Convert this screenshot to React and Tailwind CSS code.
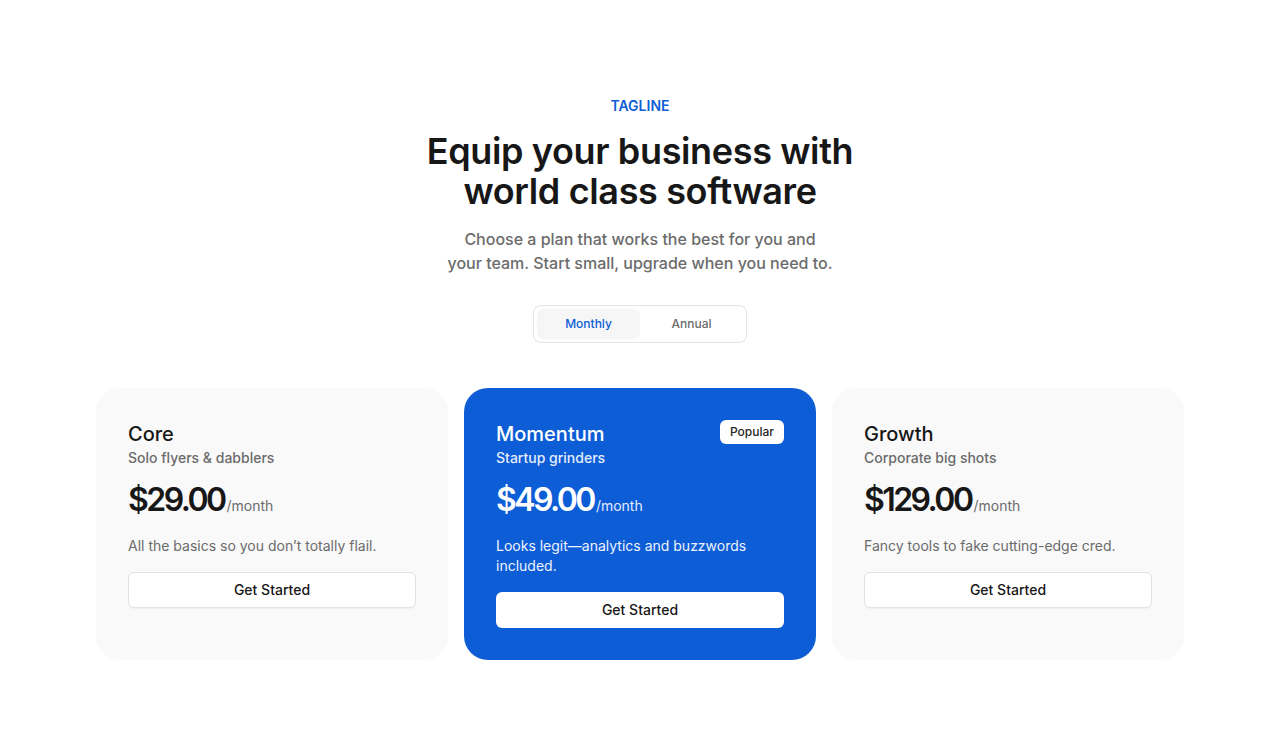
const plans = [
  {
    name: "Core",
    tagline: "Solo flyers & dabblers",
    price: "$29.00",
    desc: "All the basics so you don’t totally flail.",
  },
  {
    name: "Momentum",
    tagline: "Startup grinders",
    price: "$49.00",
    desc: "Looks legit—analytics and buzzwords included.",
    popular: true,
  },
  {
    name: "Growth",
    tagline: "Corporate big shots",
    price: "$129.00",
    desc: "Fancy tools to fake cutting-edge cred.",
  },
];

const PlanCard = ({ plan }) => {
  const hot = plan.popular;
  return (
    <div
      className={`${
        hot ? "bg-[#0d5dd6] text-white" : "bg-[#f9f9f9] text-[#171717]"
      } rounded-3xl p-8 flex flex-col`}
    >
      <div className="flex items-start justify-between">
        <div>
          <h3 className="text-xl leading-7 font-medium">{plan.name}</h3>
          <p
            className={`text-sm leading-5 font-medium ${
              hot ? "text-[#e3ecfb]" : "text-[#6b6b6b]"
            }`}
          >
            {plan.tagline}
          </p>
        </div>
        {hot && (
          <span className="bg-white text-[#262626] text-xs font-medium rounded-md h-6 w-16 flex items-center justify-center">
            Popular
          </span>
        )}
      </div>
      <div className="mt-3 flex items-end">
        <span className="text-[32px] leading-10 font-semibold tracking-[-0.08em]">
          {plan.price}
        </span>
        <span
          className={`text-sm leading-5 mb-1 ml-0.5 ${
            hot ? "text-[#e3ecfb]" : "text-[#6b6b6b]"
          }`}
        >
          /month
        </span>
      </div>
      <p
        className={`mt-4 text-sm leading-5 ${
          hot ? "text-[#eef3fc]" : "text-[#6b6b6b]"
        }`}
      >
        {plan.desc}
      </p>
      <button
        className={`mt-4 h-9 w-full rounded-md bg-white text-sm font-medium text-[#171717] ${
          hot ? "" : "border border-[#e2e2e2] shadow-[0_1px_1px_rgba(0,0,0,0.04)]"
        }`}
      >
        Get Started
      </button>
    </div>
  );
};

export default function App() {
  return (
    <div
      className="min-h-screen bg-white flex flex-col items-center pt-24"
      style={{ fontFamily: "Inter, 'Noto Sans', sans-serif" }}
    >
      <p className="text-sm leading-5 font-semibold text-[#0d5dd6]">TAGLINE</p>
      <h1 className="mt-[15px] max-w-md text-center text-4xl leading-10 font-semibold tracking-[-0.01em] text-[#171717]">
        Equip your business with world class software
      </h1>
      <p className="mt-4 text-center text-base leading-6 font-medium text-[#6b6b6b] whitespace-nowrap">
        Choose a plan that works the best for you and
        <br />
        your team. Start small, upgrade when you need to.
      </p>
      <div className="mt-[30px] flex w-[214px] rounded-lg border border-[#e4e4e4] p-[3px]">
        <button className="flex-1 h-[30px] rounded-md bg-[#f6f6f6] text-xs font-medium text-[#0d5dd6]">
          Monthly
        </button>
        <button className="flex-1 h-[30px] rounded-md text-xs font-medium text-[#6b6b6b]">
          Annual
        </button>
      </div>
      <div className="mt-[45px] grid grid-cols-3 gap-4 w-[1088px]">
        {plans.map((p) => (
          <PlanCard key={p.name} plan={p} />
        ))}
      </div>
    </div>
  );
}
